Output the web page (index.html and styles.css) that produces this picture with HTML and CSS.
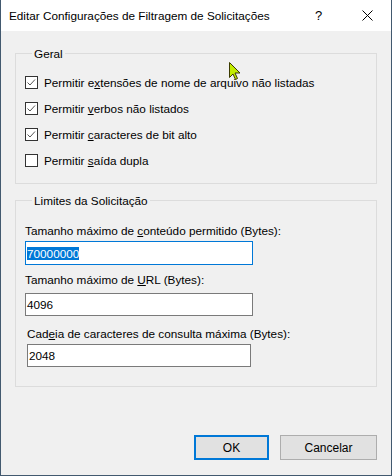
FILE: index.html
```html
<!DOCTYPE html>
<html lang="pt">
<head>
<meta charset="utf-8">
<title>Editar Configurações de Filtragem de Solicitações</title>
<link rel="stylesheet" href="styles.css">
</head>
<body>
<div class="window">
  <div class="titlebar">
    <span class="title">Editar Configurações de Filtragem de Solicitações</span>
    <span class="help">?</span>
    <span class="close"><svg width="11" height="11" viewBox="0 0 11 11"><path d="M0.5 0.5 L10.5 10.5 M10.5 0.5 L0.5 10.5" stroke="#000" stroke-width="1" fill="none"/></svg></span>
  </div>
  <div class="client">
    <fieldset class="group group-general">
      <legend class="legend">Geral</legend>
      <div class="check-row"><span class="cb"><svg width="11" height="11" viewBox="0 0 11 11"><path d="M1.5 5.5 L4 8 L9 2.5" stroke="#555" stroke-width="1" fill="none"/></svg></span><span class="check-label">Permitir e<u>x</u>tensões de nome de arquivo não listadas</span></div>
      <div class="check-row"><span class="cb"><svg width="11" height="11" viewBox="0 0 11 11"><path d="M1.5 5.5 L4 8 L9 2.5" stroke="#555" stroke-width="1" fill="none"/></svg></span><span class="check-label">Permitir <u>v</u>erbos não listados</span></div>
      <div class="check-row"><span class="cb"><svg width="11" height="11" viewBox="0 0 11 11"><path d="M1.5 5.5 L4 8 L9 2.5" stroke="#555" stroke-width="1" fill="none"/></svg></span><span class="check-label">Permitir <u>c</u>aracteres de bit alto</span></div>
      <div class="check-row"><span class="cb"></span><span class="check-label">Permitir <u>s</u>aída dupla</span></div>
    </fieldset>
    <fieldset class="group group-limits">
      <legend class="legend">Limites da Solicitação</legend>
      <div class="field field-1">
        <div class="field-label">Tamanho máximo de <u>c</u>onteúdo permitido (Bytes):</div>
        <div class="textbox focused"><span class="selected">70000000</span></div>
      </div>
      <div class="field field-2">
        <div class="field-label">Tamanho máximo de <u>U</u>RL (Bytes):</div>
        <div class="textbox">4096</div>
      </div>
      <div class="field field-3">
        <div class="field-label">Cad<u>e</u>ia de caracteres de consulta máxima (Bytes):</div>
        <div class="textbox">2048</div>
      </div>
    </fieldset>
    <div class="buttons">
      <button class="btn btn-default">OK</button>
      <button class="btn btn-cancel">Cancelar</button>
    </div>
  </div>
  <svg class="cursor" width="14" height="19" viewBox="0 0 14 19"><path d="M0.5 0.5 L0.5 15.5 L4 12 L6.5 17.5 L8.5 16.5 L6 11 L11 11 Z" fill="#c2ec00" stroke="#3a3a00" stroke-width="1" stroke-linejoin="round"/></svg>
</div>
</body>
</html>
```

FILE: styles.css
```css
* { box-sizing: border-box; }
html, body { margin: 0; padding: 0; }
body {
  font-family: "Liberation Sans", Arial, sans-serif;
  font-size: 11.75px;
  color: #000;
  background: #f0f0f0;
}
.window {
  position: relative;
  width: 392px;
  height: 476px;
  border: 1px solid #42596f;
  border-top: none;
  background: #f0f0f0;
  display: flex;
  flex-direction: column;
}
.titlebar {
  height: 31px;
  background: #fff;
  display: flex;
  align-items: center;
  padding-left: 8px;
  flex-shrink: 0;
}
.title { flex: 1; }
.help { width: 14px; margin-right: 33px; font-size: 13px; }
.close { width: 11px; height: 11px; margin-right: 18px; display: flex; }
.client {
  flex: 1;
  padding: 15px 14px 0 14px;
  display: flex;
  flex-direction: column;
}
.group {
  margin: 0;
  border: 1px solid #dcdcdc;
  padding: 0 9px;
  width: 362px;
}
.legend {
  padding: 0 2px;
  margin-left: 7px;
  line-height: 15px;
}
.group-general { padding-top: 15px; padding-bottom: 16px; }
.check-row {
  display: flex;
  align-items: center;
  height: 13px;
  margin-bottom: 13px;
}
.check-row:last-child { margin-bottom: 0; }
.cb {
  width: 13px;
  height: 13px;
  border: 1px solid #333;
  background: #fff;
  display: flex;
  margin-right: 6px;
}
.check-label { line-height: 15px; }
.group-limits { margin-top: 9px; padding-top: 15px; padding-bottom: 19px; }
.field-label { line-height: 16px; }
.textbox {
  width: 228px;
  height: 23px;
  border: 1px solid #7a7a7a;
  background: #fff;
  padding: 3px 1px;
  line-height: 15px;
}
.textbox.focused { border-color: #0078d7; height: 24px; padding-top: 4px; }
.selected { background: #0078d7; color: #fff; }
.field-1 .field-label { margin-bottom: 2px; }
.field-2 { margin-top: 7px; }
.field-2 .field-label { margin-bottom: 5px; }
.field-3 { margin-top: 10px; padding-left: 2px; }
.field-3 .field-label { margin-bottom: 2px; }
.field-3 .textbox { width: 224px; }
.buttons {
  margin-top: 48px;
  display: flex;
  justify-content: flex-end;
  gap: 11px;
}
.btn {
  font-family: inherit;
  font-size: 12px;
  height: 25px;
  background: #e1e1e1;
  border: 1px solid #adadad;
  color: #000;
  padding: 0;
}
.btn-default { width: 75px; border: 2px solid #0078d7; }
.btn-cancel { width: 97px; }
.cursor { position: absolute; left: 228px; top: 62px; }
```
